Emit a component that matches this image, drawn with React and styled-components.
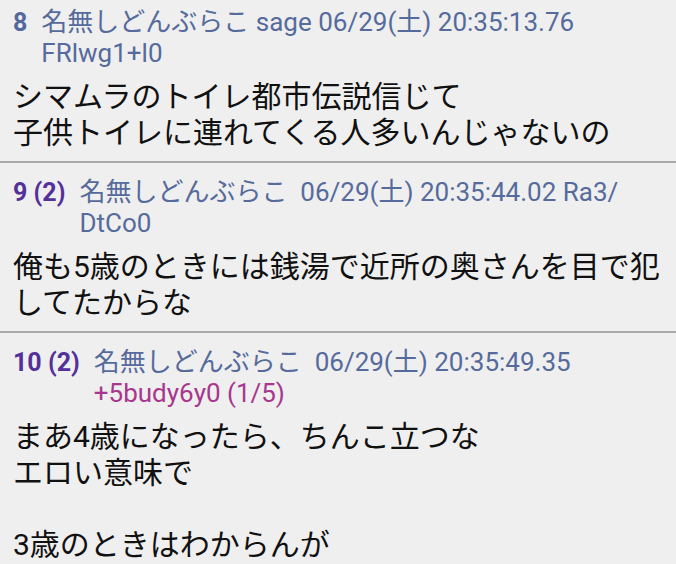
import React from "react";
import styled, { createGlobalStyle } from "styled-components";

const Global = createGlobalStyle`
  html, body {
    margin: 0;
    padding: 0;
    background: #efefef;
    overflow: hidden;
  }
  body {
    font-family: Roboto, "Noto Sans CJK JP", sans-serif;
    -webkit-font-smoothing: antialiased;
  }
`;

const List = styled.div`
  margin-top: -7px;
  width: 676px;
`;

const Post = styled.article`
  padding: 14px 10px 10px 13px;
  border-bottom: 2px solid #a9a9a9;
`;

const Header = styled.div`
  display: flex;
  align-items: flex-start;
  line-height: 31px;
  font-size: 26px;
`;

const Num = styled.span`
  flex: none;
  font-weight: 700;
  font-size: 25px;
  margin-right: 14px;
  white-space: nowrap;
  color: ${(p) => (p.$replied ? "#53309a" : "#53689b")};
`;

const Info = styled.div`
  flex: 1;
  min-width: 0;
  color: #566b9c;
  white-space: pre-wrap;
`;

const Name = styled.span`
  font-size: 26px;
`;

const Id = styled.span`
  color: ${(p) => (p.$many ? "#a8368e" : "#566b9c")};
`;

const Body = styled.div`
  margin-top: 10px;
  font-size: 30px;
  line-height: 36px;
  color: #111111;
  white-space: pre-wrap;
`;

const posts = [
  {
    num: "8",
    replied: false,
    mail: "sage",
    date: "06/29(土) 20:35:13.76",
    id: ["FRlwg1+l0"],
    body: "シマムラのトイレ都市伝説信じて\n子供トイレに連れてくる人多いんじゃないの",
  },
  {
    num: "9 (2)",
    replied: true,
    mail: "",
    date: "06/29(土) 20:35:44.02",
    id: ["Ra3/", "DtCo0"],
    body: "俺も5歳のときには銭湯で近所の奥さんを目で犯してたからな",
  },
  {
    num: "10 (2)",
    replied: true,
    mail: "",
    date: "06/29(土) 20:35:49.35",
    id: ["+5budy6y0 (1/5)"],
    many: true,
    body: "まあ4歳になったら、ちんこ立つな\nエロい意味で\n\n3歳のときはわからんが",
  },
];

export default function App() {
  return (
    <>
      <Global />
      <List>
        {posts.map((p) => (
          <Post key={p.num}>
            <Header>
              <Num $replied={p.replied}>{p.num}</Num>
              <Info>
                <Name>名無しどんぶらこ</Name>
                {` ${p.mail} ${p.date} `}
                <Id $many={p.many}>
                  {p.id.map((part, i) => (
                    <React.Fragment key={i}>
                      {i > 0 && <wbr />}
                      {part}
                    </React.Fragment>
                  ))}
                </Id>
              </Info>
            </Header>
            <Body>{p.body}</Body>
          </Post>
        ))}
      </List>
    </>
  );
}
